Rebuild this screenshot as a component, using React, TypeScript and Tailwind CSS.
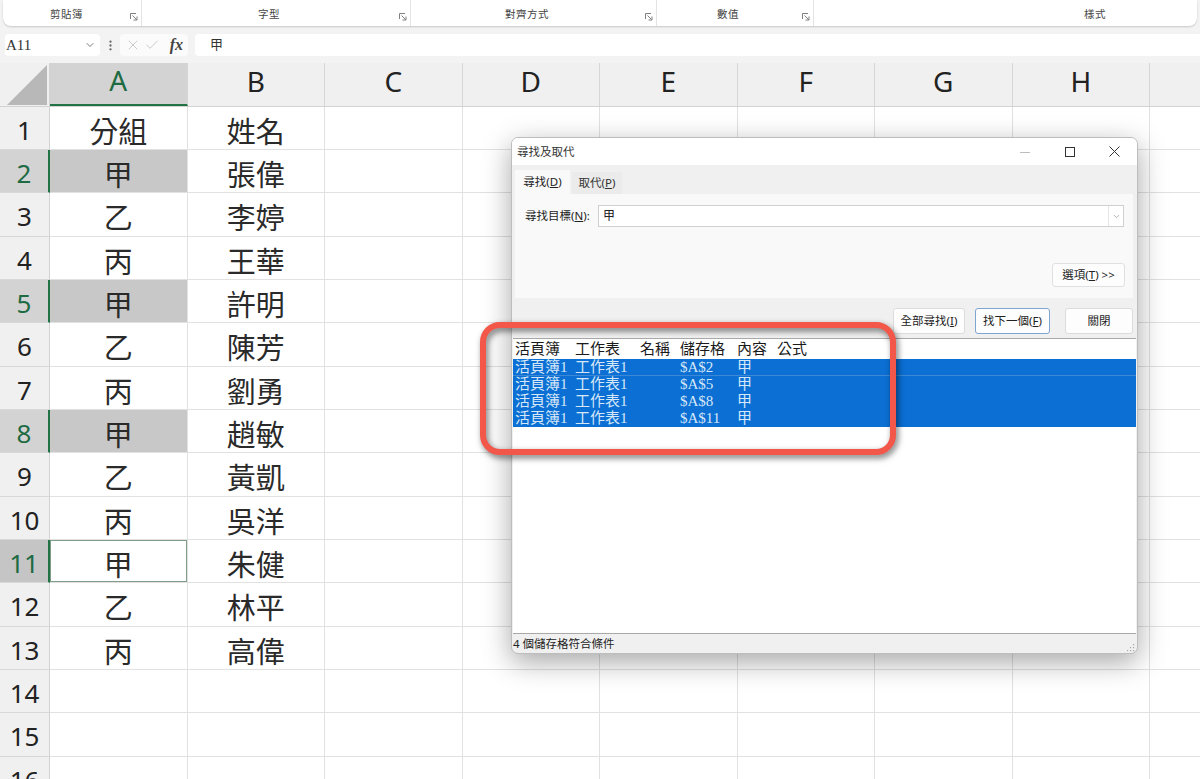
import React from 'react';
import { ChevronDown, EllipsisVertical, X, Check } from 'lucide-react';

const COLS = ['A', 'B', 'C', 'D', 'E', 'F', 'G', 'H', 'I'];

const DATA: [string, string][] = [
  ['分組', '姓名'],
  ['甲', '張偉'],
  ['乙', '李婷'],
  ['丙', '王華'],
  ['甲', '許明'],
  ['乙', '陳芳'],
  ['丙', '劉勇'],
  ['甲', '趙敏'],
  ['乙', '黃凱'],
  ['丙', '吳洋'],
  ['甲', '朱健'],
  ['乙', '林平'],
  ['丙', '高偉'],
];

const SELECTED = [2, 5, 8];
const ACTIVE = 11;

const RESULTS = ['$A$2', '$A$5', '$A$8', '$A$11'];

const Launcher = () => (
  <svg width="8" height="8" viewBox="0 0 8 8" fill="none" stroke="#808080" strokeWidth="1">
    <path d="M0.5 6V0.5H6" />
    <path d="M2.5 2.5l4.3 4.3M7 3.5V7H3.5" />
  </svg>
);

const RibbonGroup: React.FC<{ label: string; width: number; pad: number; launcher?: boolean; last?: boolean }> = ({
  label,
  width,
  pad,
  launcher = true,
  last = false,
}) => (
  <div
    className={`h-full flex items-center pt-[4px] shrink-0 ${last ? '' : 'border-r border-[#e3e3e3]'}`}
    style={{ width }}
  >
    <span className="text-[10.5px] text-[#454545] tracking-[0.5px]" style={{ marginLeft: pad }}>
      {label}
    </span>
    {launcher && (
      <span className="ml-auto mr-[3px] mt-[3px] flex">
        <Launcher />
      </span>
    )}
  </div>
);

const Ribbon = () => (
  <div className="h-[26px] mx-[3px] bg-white rounded-b-[8px] shadow-[0_1px_2px_rgba(0,0,0,0.18)] flex overflow-hidden">
    <RibbonGroup label="剪貼簿" width={139} pad={47} />
    <RibbonGroup label="字型" width={269} pad={116} />
    <RibbonGroup label="對齊方式" width={246} pad={94} />
    <RibbonGroup label="數值" width={157} pad={60} />
    <RibbonGroup label="樣式" width={383} pad={270} launcher={false} last />
  </div>
);

const FormulaBar = () => (
  <div className="h-[22px] mt-[8px] flex items-stretch">
    <div className="ml-[5px] w-[95px] bg-white rounded-[4px] flex items-center pl-[1px] pr-[4px]">
      <span className="font-['Liberation_Serif',serif] text-[15px] text-[#333]">A11</span>
      <ChevronDown size={12} strokeWidth={1.6} className="ml-auto text-[#555]" />
    </div>
    <div className="w-[20px] flex items-center justify-center">
      <EllipsisVertical size={13} strokeWidth={2.2} className="text-[#666]" />
    </div>
    <div className="w-[68px] bg-[#fbfbfb] rounded-[4px] flex items-center px-[5px] gap-[3px]">
      <X size={16} strokeWidth={1.1} className="text-[#b8b8b8]" />
      <Check size={16} strokeWidth={1.1} className="text-[#b8b8b8]" />
      <span className="ml-auto font-['Liberation_Serif',serif] italic font-bold text-[16px] text-[#444] leading-none">
        fx
      </span>
    </div>
    <div className="ml-[7px] flex-1 bg-white rounded-l-[4px] flex items-center pl-[15px]">
      <span className="text-[13px] text-[#333]">甲</span>
    </div>
  </div>
);

const HeaderRow = () => (
  <div className="h-[43.67px] flex bg-[#f0f0f0] border-b border-[#d2d2d2]">
    <div className="w-[50px] shrink-0 flex items-end justify-end pr-[2px] pb-[1px] border-r border-[#d2d2d2]">
      <svg width="40" height="40" viewBox="0 0 40 40">
        <polygon points="40,0 40,40 0,40" fill="#b8b8b8" />
      </svg>
    </div>
    {COLS.map((c) => (
      <div
        key={c}
        className={`w-[137.5px] shrink-0 flex items-center justify-center pb-[7px] text-[28px] border-r border-[#d6d6d6] ${
          c === 'A' ? 'bg-[#d3d3d3] text-[#1e6b43] border-b-2 border-b-[#217346]' : 'text-[#222]'
        }`}
      >
        {c === 'I' ? '' : c}
      </div>
    ))}
  </div>
);

const SheetRow: React.FC<{ n: number }> = ({ n }) => {
  const data = DATA[n - 1];
  const selected = SELECTED.includes(n);
  const active = n === ACTIVE;
  const headerCls = active
    ? 'bg-[#c5c5c5] text-[#1e6b43] border-r-2 border-r-[#217346]'
    : selected
      ? 'bg-[#d3d3d3] text-[#1e6b43] border-r-2 border-r-[#217346]'
      : 'bg-[#f0f0f0] text-[#222] border-r border-r-[#d2d2d2]';
  return (
    <div className="h-[43.33px] flex shrink-0">
      <div
        className={`w-[50px] shrink-0 flex items-center justify-center pt-[5px] text-[26px] border-b border-[#d8d8d8] ${headerCls}`}
      >
        {n}
      </div>
      {COLS.map((c, i) => {
        const value = data && i < 2 ? data[i] : '';
        let cls = 'bg-white';
        if (i === 0 && selected) cls = 'bg-[#c8c8c8]';
        if (i === 0 && active) cls = 'bg-white shadow-[inset_0_0_0_1px_#7f9d89]';
        return (
          <div
            key={c}
            className={`w-[137.5px] shrink-0 flex items-center justify-center pt-[5px] border-r border-b border-[#e1e1e1] font-['Noto_Sans_CJK_TC',sans-serif] text-[29px] text-[#2a2a2a] ${cls}`}
          >
            {value}
          </div>
        );
      })}
    </div>
  );
};

const DialogButton: React.FC<{ width: number; focused?: boolean; children: React.ReactNode }> = ({
  width,
  focused,
  children,
}) => (
  <button
    className={`h-[26px] rounded-[3px] bg-[#fdfdfd] text-[11.5px] text-[#222] flex items-center justify-center border ${
      focused ? 'border-[#7ea6d0]' : 'border-[#dcdcdc]'
    }`}
    style={{ width }}
  >
    {children}
  </button>
);

const FindDialog = () => (
  <div className="absolute left-[511px] top-[137px] w-[627px] h-[517px] rounded-[7px] bg-[#f0f0f0] border border-[#bdbdbd] shadow-[0_8px_28px_rgba(0,0,0,0.35)] flex flex-col overflow-hidden text-[#222]">
    <div className="h-[27px] shrink-0 bg-white flex items-center pl-[5px]">
      <span className="text-[11.5px] text-[#333]">尋找及取代</span>
      <div className="ml-auto flex h-full">
        <div className="w-[45px] flex items-center justify-center">
          <svg width="10" height="10" viewBox="0 0 10 10">
            <path d="M0 5.5h10" stroke="#bdbdbd" strokeWidth="1" />
          </svg>
        </div>
        <div className="w-[45px] flex items-center justify-center">
          <svg width="10" height="10" viewBox="0 0 10 10" fill="none">
            <rect x="0.5" y="0.5" width="9" height="9" stroke="#333" strokeWidth="1" />
          </svg>
        </div>
        <div className="w-[45px] flex items-center justify-center">
          <svg width="11" height="11" viewBox="0 0 11 11">
            <path d="M0.5 0.5l10 10M10.5 0.5l-10 10" stroke="#333" strokeWidth="1" />
          </svg>
        </div>
      </div>
    </div>

    <div className="h-[29px] shrink-0 flex items-end pl-[3px]">
      <div className="h-[24px] w-[55px] bg-[#f9f9f9] flex items-center justify-center text-[11.5px]">
        尋找(<span className="underline">D</span>)
      </div>
      <div className="ml-[2px] h-[22px] w-[50px] bg-[#ebebeb] flex items-center justify-center text-[11.5px] text-[#333]">
        取代(<span className="underline">P</span>)
      </div>
    </div>

    <div className="h-[104px] shrink-0 ml-[3px] mr-[4px] bg-[#f9f9f9] flex flex-col">
      <div className="mt-[11px] h-[22px] flex items-center pl-[10px] pr-[9px]">
        <span className="w-[73px] shrink-0 text-[11.5px]">
          尋找目標(<span className="underline">N</span>):
        </span>
        <div className="flex-1 h-full bg-white border border-[#cfcfcf] flex items-center pl-[4px]">
          <span className="text-[12px]">甲</span>
          <div className="ml-auto h-full w-[15px] border-l border-[#e6e6e6] flex items-center justify-center">
            <ChevronDown size={9} strokeWidth={1.5} className="text-[#777]" />
          </div>
        </div>
      </div>
      <div className="mt-auto mb-[11px] mr-[8px] self-end">
        <button className="h-[24px] w-[73px] bg-[#fdfdfd] border border-[#e0e0e0] rounded-[3px] text-[11.5px] flex items-center justify-center">
          選項(<span className="underline">T</span>)&nbsp;&gt;&gt;
        </button>
      </div>
    </div>

    <div className="h-[40px] shrink-0 pt-[10px] pr-[4px] flex justify-end">
      <DialogButton width={72}>
        全部尋找(<span className="underline">I</span>)
      </DialogButton>
      <div className="w-[10px]" />
      <DialogButton width={75} focused>
        找下一個(<span className="underline">F</span>)
      </DialogButton>
      <div className="w-[15px]" />
      <DialogButton width={68}>關閉</DialogButton>
    </div>

    <div className="flex-1 mx-[1px] bg-white border-y border-[#a9a9a9] font-['Liberation_Serif','Noto_Sans_CJK_TC',serif] text-[15px]">
      <div className="h-[20px] flex items-center pl-[2px] pt-[1px] text-[#1a1a1a]">
        <span className="w-[60px]">活頁簿</span>
        <span className="w-[65px]">工作表</span>
        <span className="w-[40px]">名稱</span>
        <span className="w-[57px]">儲存格</span>
        <span className="w-[40px]">內容</span>
        <span>公式</span>
      </div>
      {RESULTS.map((cell, i) => (
        <div
          key={cell}
          className={`h-[17px] flex items-center pl-[2px] bg-[#0b6fd3] text-[#d6e7f8] ${
            i === 0 ? 'border-b border-[#3c88d4]' : ''
          }`}
        >
          <span className="w-[60px]">活頁簿1</span>
          <span className="w-[65px]">工作表1</span>
          <span className="w-[40px]" />
          <span className="w-[57px]">{cell}</span>
          <span className="w-[40px]">甲</span>
        </div>
      ))}
    </div>

    <div className="h-[19px] shrink-0 flex items-center pl-[1px] text-[11.5px] text-[#222]">
      <span>4 個儲存格符合條件</span>
      <svg className="ml-auto mr-[2px] mt-[6px]" width="10" height="10" viewBox="0 0 10 10" fill="#a8a8a8">
        <rect x="8" y="2" width="1.2" height="1.2" />
        <rect x="5" y="5" width="1.2" height="1.2" />
        <rect x="8" y="5" width="1.2" height="1.2" />
        <rect x="2" y="8" width="1.2" height="1.2" />
        <rect x="5" y="8" width="1.2" height="1.2" />
        <rect x="8" y="8" width="1.2" height="1.2" />
      </svg>
    </div>
  </div>
);

export default function App() {
  return (
    <div className="relative w-[1200px] h-[779px] overflow-hidden bg-[#f3f3f3] font-['Noto_Sans','Noto_Sans_CJK_TC',sans-serif]">
      <Ribbon />
      <FormulaBar />
      <div className="mt-[7px]">
        <HeaderRow />
        {Array.from({ length: 16 }, (_, i) => (
          <SheetRow key={i} n={i + 1} />
        ))}
      </div>

      <FindDialog />

      <div className="absolute left-[480px] top-[322px] w-[416px] h-[133px] rounded-[20px] border-[6px] border-[#f2574a] drop-shadow-[2px_3px_3px_rgba(0,0,0,0.55)]" />
    </div>
  );
}
